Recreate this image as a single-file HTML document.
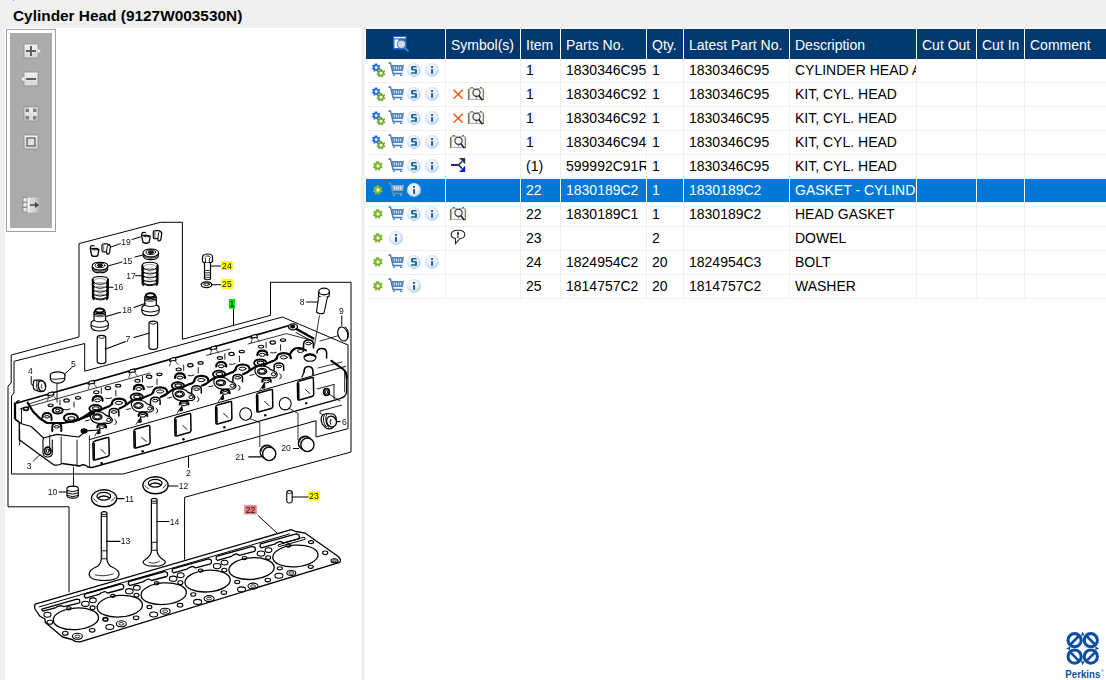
<!DOCTYPE html>
<html><head><meta charset="utf-8">
<style>
html,body{margin:0;padding:0;width:1106px;height:680px;overflow:hidden;background:#f0f0f0;font-family:"Liberation Sans",sans-serif;}
.title{position:absolute;left:13px;top:4.7px;font-size:15.4px;font-weight:bold;color:#000;line-height:22px;white-space:nowrap;}
.panel{position:absolute;background:#fff;}
.ht{position:absolute;color:#fff;font-size:14px;line-height:30px;white-space:nowrap;}
.ct{position:absolute;color:#000;font-size:14px;line-height:23px;white-space:nowrap;overflow:hidden;}
.ct.sel{color:#fff;}
svg{position:absolute;left:0;top:0;}
</style></head><body>
<div id="topmark" style="position:absolute;left:13px;top:0;width:1px;height:1px;background:#9a9a9a"></div>
<div class="title">Cylinder Head (9127W003530N)</div>
<div class="panel" style="left:5px;top:28px;width:356px;height:652px"></div>
<div class="panel" style="left:365px;top:28px;width:741px;height:652px"></div>
<div style="position:absolute;left:366px;top:29px;width:740px;height:30px;background:#00396f"></div>
<div style="position:absolute;left:445px;top:29px;width:1px;height:30px;background:#ffffff"></div>
<div style="position:absolute;left:520px;top:29px;width:1px;height:30px;background:#ffffff"></div>
<div style="position:absolute;left:560px;top:29px;width:1px;height:30px;background:#ffffff"></div>
<div style="position:absolute;left:646px;top:29px;width:1px;height:30px;background:#ffffff"></div>
<div style="position:absolute;left:683px;top:29px;width:1px;height:30px;background:#ffffff"></div>
<div style="position:absolute;left:789px;top:29px;width:1px;height:30px;background:#ffffff"></div>
<div style="position:absolute;left:916px;top:29px;width:1px;height:30px;background:#ffffff"></div>
<div style="position:absolute;left:976px;top:29px;width:1px;height:30px;background:#ffffff"></div>
<div style="position:absolute;left:1024px;top:29px;width:1px;height:30px;background:#ffffff"></div>
<div class="ht" style="left:451px;top:30px">Symbol(s)</div>
<div class="ht" style="left:526px;top:30px">Item</div>
<div class="ht" style="left:566px;top:30px">Parts No.</div>
<div class="ht" style="left:652px;top:30px">Qty.</div>
<div class="ht" style="left:689px;top:30px">Latest Part No.</div>
<div class="ht" style="left:795px;top:30px">Description</div>
<div class="ht" style="left:922px;top:30px">Cut Out</div>
<div class="ht" style="left:982px;top:30px">Cut In</div>
<div class="ht" style="left:1030px;top:30px">Comment</div>
<div style="position:absolute;left:366px;top:82px;width:740px;height:1px;background:#efefef"></div>
<div style="position:absolute;left:445px;top:59px;width:1px;height:23px;background:#efefef"></div>
<div style="position:absolute;left:520px;top:59px;width:1px;height:23px;background:#efefef"></div>
<div style="position:absolute;left:560px;top:59px;width:1px;height:23px;background:#efefef"></div>
<div style="position:absolute;left:646px;top:59px;width:1px;height:23px;background:#efefef"></div>
<div style="position:absolute;left:683px;top:59px;width:1px;height:23px;background:#efefef"></div>
<div style="position:absolute;left:789px;top:59px;width:1px;height:23px;background:#efefef"></div>
<div style="position:absolute;left:916px;top:59px;width:1px;height:23px;background:#efefef"></div>
<div style="position:absolute;left:976px;top:59px;width:1px;height:23px;background:#efefef"></div>
<div style="position:absolute;left:1024px;top:59px;width:1px;height:23px;background:#efefef"></div>
<div class="ct" style="left:526px;top:59px;width:34px">1</div>
<div class="ct" style="left:566px;top:59px;width:80px">1830346C95</div>
<div class="ct" style="left:652px;top:59px;width:31px">1</div>
<div class="ct" style="left:689px;top:59px;width:100px">1830346C95</div>
<div class="ct" style="left:795px;top:59px;width:121px">CYLINDER HEAD ASSEMBLY</div>
<div style="position:absolute;left:366px;top:106px;width:740px;height:1px;background:#efefef"></div>
<div style="position:absolute;left:445px;top:83px;width:1px;height:23px;background:#efefef"></div>
<div style="position:absolute;left:520px;top:83px;width:1px;height:23px;background:#efefef"></div>
<div style="position:absolute;left:560px;top:83px;width:1px;height:23px;background:#efefef"></div>
<div style="position:absolute;left:646px;top:83px;width:1px;height:23px;background:#efefef"></div>
<div style="position:absolute;left:683px;top:83px;width:1px;height:23px;background:#efefef"></div>
<div style="position:absolute;left:789px;top:83px;width:1px;height:23px;background:#efefef"></div>
<div style="position:absolute;left:916px;top:83px;width:1px;height:23px;background:#efefef"></div>
<div style="position:absolute;left:976px;top:83px;width:1px;height:23px;background:#efefef"></div>
<div style="position:absolute;left:1024px;top:83px;width:1px;height:23px;background:#efefef"></div>
<div class="ct" style="left:526px;top:83px;width:34px">1</div>
<div class="ct" style="left:566px;top:83px;width:80px">1830346C92</div>
<div class="ct" style="left:652px;top:83px;width:31px">1</div>
<div class="ct" style="left:689px;top:83px;width:100px">1830346C95</div>
<div class="ct" style="left:795px;top:83px;width:121px">KIT, CYL. HEAD</div>
<div style="position:absolute;left:366px;top:130px;width:740px;height:1px;background:#efefef"></div>
<div style="position:absolute;left:445px;top:107px;width:1px;height:23px;background:#efefef"></div>
<div style="position:absolute;left:520px;top:107px;width:1px;height:23px;background:#efefef"></div>
<div style="position:absolute;left:560px;top:107px;width:1px;height:23px;background:#efefef"></div>
<div style="position:absolute;left:646px;top:107px;width:1px;height:23px;background:#efefef"></div>
<div style="position:absolute;left:683px;top:107px;width:1px;height:23px;background:#efefef"></div>
<div style="position:absolute;left:789px;top:107px;width:1px;height:23px;background:#efefef"></div>
<div style="position:absolute;left:916px;top:107px;width:1px;height:23px;background:#efefef"></div>
<div style="position:absolute;left:976px;top:107px;width:1px;height:23px;background:#efefef"></div>
<div style="position:absolute;left:1024px;top:107px;width:1px;height:23px;background:#efefef"></div>
<div class="ct" style="left:526px;top:107px;width:34px">1</div>
<div class="ct" style="left:566px;top:107px;width:80px">1830346C92</div>
<div class="ct" style="left:652px;top:107px;width:31px">1</div>
<div class="ct" style="left:689px;top:107px;width:100px">1830346C95</div>
<div class="ct" style="left:795px;top:107px;width:121px">KIT, CYL. HEAD</div>
<div style="position:absolute;left:366px;top:154px;width:740px;height:1px;background:#efefef"></div>
<div style="position:absolute;left:445px;top:131px;width:1px;height:23px;background:#efefef"></div>
<div style="position:absolute;left:520px;top:131px;width:1px;height:23px;background:#efefef"></div>
<div style="position:absolute;left:560px;top:131px;width:1px;height:23px;background:#efefef"></div>
<div style="position:absolute;left:646px;top:131px;width:1px;height:23px;background:#efefef"></div>
<div style="position:absolute;left:683px;top:131px;width:1px;height:23px;background:#efefef"></div>
<div style="position:absolute;left:789px;top:131px;width:1px;height:23px;background:#efefef"></div>
<div style="position:absolute;left:916px;top:131px;width:1px;height:23px;background:#efefef"></div>
<div style="position:absolute;left:976px;top:131px;width:1px;height:23px;background:#efefef"></div>
<div style="position:absolute;left:1024px;top:131px;width:1px;height:23px;background:#efefef"></div>
<div class="ct" style="left:526px;top:131px;width:34px">1</div>
<div class="ct" style="left:566px;top:131px;width:80px">1830346C94</div>
<div class="ct" style="left:652px;top:131px;width:31px">1</div>
<div class="ct" style="left:689px;top:131px;width:100px">1830346C95</div>
<div class="ct" style="left:795px;top:131px;width:121px">KIT, CYL. HEAD</div>
<div style="position:absolute;left:366px;top:178px;width:740px;height:1px;background:#efefef"></div>
<div style="position:absolute;left:445px;top:155px;width:1px;height:23px;background:#efefef"></div>
<div style="position:absolute;left:520px;top:155px;width:1px;height:23px;background:#efefef"></div>
<div style="position:absolute;left:560px;top:155px;width:1px;height:23px;background:#efefef"></div>
<div style="position:absolute;left:646px;top:155px;width:1px;height:23px;background:#efefef"></div>
<div style="position:absolute;left:683px;top:155px;width:1px;height:23px;background:#efefef"></div>
<div style="position:absolute;left:789px;top:155px;width:1px;height:23px;background:#efefef"></div>
<div style="position:absolute;left:916px;top:155px;width:1px;height:23px;background:#efefef"></div>
<div style="position:absolute;left:976px;top:155px;width:1px;height:23px;background:#efefef"></div>
<div style="position:absolute;left:1024px;top:155px;width:1px;height:23px;background:#efefef"></div>
<div class="ct" style="left:526px;top:155px;width:34px">(1)</div>
<div class="ct" style="left:566px;top:155px;width:80px">599992C91R</div>
<div class="ct" style="left:652px;top:155px;width:31px">1</div>
<div class="ct" style="left:689px;top:155px;width:100px">1830346C95</div>
<div class="ct" style="left:795px;top:155px;width:121px">KIT, CYL. HEAD</div>
<div style="position:absolute;left:366px;top:179px;width:740px;height:23px;background:#0078d7"></div>
<div style="position:absolute;left:366px;top:202px;width:740px;height:1px;background:#efefef"></div>
<div style="position:absolute;left:445px;top:179px;width:1px;height:23px;background:#ffffff"></div>
<div style="position:absolute;left:520px;top:179px;width:1px;height:23px;background:#ffffff"></div>
<div style="position:absolute;left:560px;top:179px;width:1px;height:23px;background:#ffffff"></div>
<div style="position:absolute;left:646px;top:179px;width:1px;height:23px;background:#ffffff"></div>
<div style="position:absolute;left:683px;top:179px;width:1px;height:23px;background:#ffffff"></div>
<div style="position:absolute;left:789px;top:179px;width:1px;height:23px;background:#ffffff"></div>
<div style="position:absolute;left:916px;top:179px;width:1px;height:23px;background:#ffffff"></div>
<div style="position:absolute;left:976px;top:179px;width:1px;height:23px;background:#ffffff"></div>
<div style="position:absolute;left:1024px;top:179px;width:1px;height:23px;background:#ffffff"></div>
<div class="ct sel" style="left:526px;top:179px;width:34px">22</div>
<div class="ct sel" style="left:566px;top:179px;width:80px">1830189C2</div>
<div class="ct sel" style="left:652px;top:179px;width:31px">1</div>
<div class="ct sel" style="left:689px;top:179px;width:100px">1830189C2</div>
<div class="ct sel" style="left:795px;top:179px;width:121px">GASKET - CYLINDER HEAD</div>
<div style="position:absolute;left:366px;top:226px;width:740px;height:1px;background:#efefef"></div>
<div style="position:absolute;left:445px;top:203px;width:1px;height:23px;background:#efefef"></div>
<div style="position:absolute;left:520px;top:203px;width:1px;height:23px;background:#efefef"></div>
<div style="position:absolute;left:560px;top:203px;width:1px;height:23px;background:#efefef"></div>
<div style="position:absolute;left:646px;top:203px;width:1px;height:23px;background:#efefef"></div>
<div style="position:absolute;left:683px;top:203px;width:1px;height:23px;background:#efefef"></div>
<div style="position:absolute;left:789px;top:203px;width:1px;height:23px;background:#efefef"></div>
<div style="position:absolute;left:916px;top:203px;width:1px;height:23px;background:#efefef"></div>
<div style="position:absolute;left:976px;top:203px;width:1px;height:23px;background:#efefef"></div>
<div style="position:absolute;left:1024px;top:203px;width:1px;height:23px;background:#efefef"></div>
<div class="ct" style="left:526px;top:203px;width:34px">22</div>
<div class="ct" style="left:566px;top:203px;width:80px">1830189C1</div>
<div class="ct" style="left:652px;top:203px;width:31px">1</div>
<div class="ct" style="left:689px;top:203px;width:100px">1830189C2</div>
<div class="ct" style="left:795px;top:203px;width:121px">HEAD GASKET</div>
<div style="position:absolute;left:366px;top:250px;width:740px;height:1px;background:#efefef"></div>
<div style="position:absolute;left:445px;top:227px;width:1px;height:23px;background:#efefef"></div>
<div style="position:absolute;left:520px;top:227px;width:1px;height:23px;background:#efefef"></div>
<div style="position:absolute;left:560px;top:227px;width:1px;height:23px;background:#efefef"></div>
<div style="position:absolute;left:646px;top:227px;width:1px;height:23px;background:#efefef"></div>
<div style="position:absolute;left:683px;top:227px;width:1px;height:23px;background:#efefef"></div>
<div style="position:absolute;left:789px;top:227px;width:1px;height:23px;background:#efefef"></div>
<div style="position:absolute;left:916px;top:227px;width:1px;height:23px;background:#efefef"></div>
<div style="position:absolute;left:976px;top:227px;width:1px;height:23px;background:#efefef"></div>
<div style="position:absolute;left:1024px;top:227px;width:1px;height:23px;background:#efefef"></div>
<div class="ct" style="left:526px;top:227px;width:34px">23</div>
<div class="ct" style="left:652px;top:227px;width:31px">2</div>
<div class="ct" style="left:795px;top:227px;width:121px">DOWEL</div>
<div style="position:absolute;left:366px;top:274px;width:740px;height:1px;background:#efefef"></div>
<div style="position:absolute;left:445px;top:251px;width:1px;height:23px;background:#efefef"></div>
<div style="position:absolute;left:520px;top:251px;width:1px;height:23px;background:#efefef"></div>
<div style="position:absolute;left:560px;top:251px;width:1px;height:23px;background:#efefef"></div>
<div style="position:absolute;left:646px;top:251px;width:1px;height:23px;background:#efefef"></div>
<div style="position:absolute;left:683px;top:251px;width:1px;height:23px;background:#efefef"></div>
<div style="position:absolute;left:789px;top:251px;width:1px;height:23px;background:#efefef"></div>
<div style="position:absolute;left:916px;top:251px;width:1px;height:23px;background:#efefef"></div>
<div style="position:absolute;left:976px;top:251px;width:1px;height:23px;background:#efefef"></div>
<div style="position:absolute;left:1024px;top:251px;width:1px;height:23px;background:#efefef"></div>
<div class="ct" style="left:526px;top:251px;width:34px">24</div>
<div class="ct" style="left:566px;top:251px;width:80px">1824954C2</div>
<div class="ct" style="left:652px;top:251px;width:31px">20</div>
<div class="ct" style="left:689px;top:251px;width:100px">1824954C3</div>
<div class="ct" style="left:795px;top:251px;width:121px">BOLT</div>
<div style="position:absolute;left:366px;top:298px;width:740px;height:1px;background:#efefef"></div>
<div style="position:absolute;left:445px;top:275px;width:1px;height:23px;background:#efefef"></div>
<div style="position:absolute;left:520px;top:275px;width:1px;height:23px;background:#efefef"></div>
<div style="position:absolute;left:560px;top:275px;width:1px;height:23px;background:#efefef"></div>
<div style="position:absolute;left:646px;top:275px;width:1px;height:23px;background:#efefef"></div>
<div style="position:absolute;left:683px;top:275px;width:1px;height:23px;background:#efefef"></div>
<div style="position:absolute;left:789px;top:275px;width:1px;height:23px;background:#efefef"></div>
<div style="position:absolute;left:916px;top:275px;width:1px;height:23px;background:#efefef"></div>
<div style="position:absolute;left:976px;top:275px;width:1px;height:23px;background:#efefef"></div>
<div style="position:absolute;left:1024px;top:275px;width:1px;height:23px;background:#efefef"></div>
<div class="ct" style="left:526px;top:275px;width:34px">25</div>
<div class="ct" style="left:566px;top:275px;width:80px">1814757C2</div>
<div class="ct" style="left:652px;top:275px;width:31px">20</div>
<div class="ct" style="left:689px;top:275px;width:100px">1814757C2</div>
<div class="ct" style="left:795px;top:275px;width:121px">WASHER</div>
<svg width="1106" height="680" viewBox="0 0 1106 680">
<defs>
  <linearGradient id="btng" x1="0" y1="0" x2="0" y2="1">
    <stop offset="0" stop-color="#f4f4f4"/><stop offset="0.5" stop-color="#e2e2e2"/><stop offset="1" stop-color="#d6d6d6"/>
  </linearGradient>
  <linearGradient id="fadeg" x1="0" y1="0" x2="1" y2="0"><stop offset="0" stop-color="#e8e8e8"/><stop offset="0.6" stop-color="#cfcfcf"/><stop offset="1" stop-color="#ababab"/></linearGradient>
  <radialGradient id="circg" cx="0.45" cy="0.42" r="0.6">
    <stop offset="0" stop-color="#ffffff"/><stop offset="0.5" stop-color="#eef4fa"/><stop offset="0.85" stop-color="#c3d9ee"/><stop offset="1" stop-color="#a8c7e5"/>
  </radialGradient>
  <g id="gearshape">
    <path d="M0,-4.6 L1.2,-4.6 L1.5,-3.3 L2.7,-2.6 L3.9,-3.2 L4.6,-2.2 L3.7,-1.2 L3.8,0.3 L4.8,1.1 L4.3,2.3 L3.0,2.2 L2.0,3.2 L2.2,4.5 L1.0,4.8 L0.3,3.8 L-1.2,3.8 L-2.0,4.8 L-3.1,4.2 L-2.9,3.0 L-3.8,2.0 L-4.9,2.0 L-5.0,0.8 L-3.9,0.2 L-3.9,-1.2 L-4.8,-2.0 L-4.2,-3.2 L-2.9,-2.9 L-1.8,-3.6 L-1.6,-4.8 Z"/>
  </g>
  <g id="gears2">
    <g transform="translate(6.2,8.6) scale(0.88)" fill="#2a6fe0"><use href="#gearshape"/><circle r="1.6" fill="#fff"/></g>
    <g transform="translate(11,14.2) scale(0.9)" fill="#6fae2a"><use href="#gearshape"/><circle r="1.6" fill="#fff"/></g>
  </g>
  <g id="gear1">
    <g transform="translate(8,10.9)" fill="#7fba2c"><use href="#gearshape"/><circle r="1.6" fill="#fff"/></g>
  </g>
  <g id="cart">
    <path d="M0.5,4 L2.5,4 L5,14.5 L14.5,14.5" fill="none" stroke="#4a72a8" stroke-width="1.3"/>
    <path d="M3.5,6 L16,6 L15,12 L5,12 Z" fill="#5b82b8"/>
    <path d="M5.5,7.5 L14.5,7.5 L14,10.5 L6,10.5 Z" fill="#c7d7ea"/>
    <path d="M7.5,7 V11 M9.5,7 V11 M11.5,7 V11 M13.5,7 V11" stroke="#5b82b8" stroke-width="0.9"/>
    <rect x="5" y="15.5" width="2" height="1.5" fill="#3a8ee0"/><rect x="12" y="15.5" width="2" height="1.5" fill="#3a8ee0"/>
  </g>
  <g id="cartsel">
    <path d="M0.5,4 L2.5,4 L5,14.5 L14.5,14.5" fill="none" stroke="#6f8fb8" stroke-width="1.3"/>
    <path d="M3.5,6 L16,6 L15,12 L5,12 Z" fill="#8aa6c8"/>
    <path d="M5.5,7.5 L14.5,7.5 L14,10.5 L6,10.5 Z" fill="#e8eef5"/>
    <path d="M7.5,7 V11 M9.5,7 V11 M11.5,7 V11 M13.5,7 V11" stroke="#8aa6c8" stroke-width="0.9"/>
    <rect x="5" y="15.5" width="2" height="1.5" fill="#6fa8e0"/><rect x="12" y="15.5" width="2" height="1.5" fill="#6fa8e0"/>
  </g>
  <g id="sic">
    <circle cx="7.9" cy="10.9" r="7" fill="url(#circg)"/>
    <path d="M6,6.9 H10.6 V8.4 H7.2 V10.1 H9.6 Q11,10.2 11,11.6 V13.4 Q11,14.8 9.6,14.8 H5 V13.3 H9 V11.6 H6.4 Q5,11.5 5,10.1 V8.4 Q5,6.9 6,6.9 Z" fill="#1766ae"/>
  </g>
  <g id="iic">
    <circle cx="8" cy="10.9" r="7" fill="url(#circg)"/>
    <rect x="7" y="7" width="2.1" height="1.9" fill="#2f5f9f"/>
    <rect x="7" y="10.1" width="2.1" height="4.7" fill="#2f5f9f"/>
  </g>
  <g id="xic">
    <path d="M2.5,6.8 L11.8,15.8 M11.8,6.8 L2.5,15.8" stroke="#ff5a1a" stroke-width="1.6"/>
  </g>
  <g id="book">
    <path d="M-0.5,6 V17 M14.5,6 V17 M1.5,4.5 H4 M11,4.5 H13" stroke="#7a7a40" stroke-width="1.2" fill="none"/>
    <path d="M0.5,5.5 L6.5,5.5 L7.5,16.5 L0.5,16.5 Z M8,5.5 L14,5.5 L14,16.5 L7.5,16.5 Z" fill="#f6f6f6" stroke="#999" stroke-width="0.8"/>
    <circle cx="7.5" cy="9.8" r="3.6" fill="#f4f4f4" stroke="#333" stroke-width="1.1"/>
    <path d="M9.7,12.6 L13.5,17.2" stroke="#222" stroke-width="1.6"/>
  </g>
  <g id="arrowic">
    <path d="M0,10 H7.5" stroke="#0d1660" stroke-width="1.8"/>
    <path d="M7.5,10 L11,6.5" stroke="#333" stroke-width="1.6"/>
    <path d="M8,3 H14.2 V9.2 Z" fill="#333"/>
    <path d="M7.5,10 L11,13.5" stroke="#1022a0" stroke-width="1.6"/>
    <path d="M8,17 H14.2 V10.8 Z" fill="#0a20e8"/>
  </g>
  <g id="bubble">
    <path d="M4.5,11.5 C1,11 0.2,9 0.2,7.5 C0.2,5 2.5,3.2 7,3.2 C11.5,3.2 13.8,5 13.8,7.5 C13.8,10 11.5,11.5 9,11.5 L4.5,16.5 Z" fill="#fff" stroke="#222" stroke-width="1.1"/>
    <rect x="6.2" y="4.8" width="1.6" height="3.6" fill="#222"/><rect x="6.2" y="9.2" width="1.6" height="1.6" fill="#222"/>
  </g>
</defs>
<!-- header icon -->
<g>
  <rect x="393" y="36" width="13.5" height="13.5" fill="#1f6fc0"/>
  <rect x="394.5" y="39.5" width="4" height="8.5" fill="#fff"/>
  <rect x="394" y="37" width="11.5" height="1.3" fill="#fff"/>
  <circle cx="401.5" cy="44.3" r="4.2" fill="#d8d8d8" stroke="#2a70c0" stroke-width="1"/>
  <path d="M404.5,47.5 L408.5,51.5" stroke="#3a80d0" stroke-width="2"/>
</g>
<use href="#gears2" x="370" y="59"/>
<use href="#cart" x="388" y="59"/>
<use href="#sic" x="406" y="59"/>
<use href="#iic" x="424" y="59"/>
<use href="#gears2" x="370" y="83"/>
<use href="#cart" x="388" y="83"/>
<use href="#sic" x="406" y="83"/>
<use href="#iic" x="424" y="83"/>
<use href="#xic" x="451" y="83"/>
<use href="#book" x="469" y="83"/>
<use href="#gears2" x="370" y="107"/>
<use href="#cart" x="388" y="107"/>
<use href="#sic" x="406" y="107"/>
<use href="#iic" x="424" y="107"/>
<use href="#xic" x="451" y="107"/>
<use href="#book" x="469" y="107"/>
<use href="#gears2" x="370" y="131"/>
<use href="#cart" x="388" y="131"/>
<use href="#sic" x="406" y="131"/>
<use href="#iic" x="424" y="131"/>
<use href="#book" x="451" y="131"/>
<use href="#gear1" x="370" y="155"/>
<use href="#cart" x="388" y="155"/>
<use href="#sic" x="406" y="155"/>
<use href="#iic" x="424" y="155"/>
<use href="#arrowic" x="451" y="155"/>
<use href="#gear1" x="370" y="179"/>
<use href="#cartsel" x="388" y="179"/>
<use href="#iic" x="406" y="179"/>
<use href="#gear1" x="370" y="203"/>
<use href="#cart" x="388" y="203"/>
<use href="#sic" x="406" y="203"/>
<use href="#iic" x="424" y="203"/>
<use href="#book" x="451" y="203"/>
<use href="#gear1" x="370" y="227"/>
<use href="#iic" x="388" y="227"/>
<use href="#bubble" x="451" y="227"/>
<use href="#gear1" x="370" y="251"/>
<use href="#cart" x="388" y="251"/>
<use href="#sic" x="406" y="251"/>
<use href="#iic" x="424" y="251"/>
<use href="#gear1" x="370" y="275"/>
<use href="#cart" x="388" y="275"/>
<use href="#iic" x="406" y="275"/>
<!-- toolbar -->
<g>
  <rect x="6.5" y="29.5" width="49" height="202" fill="#fff" stroke="#a0a0a0" stroke-width="1"/>
  <rect x="10" y="33" width="42" height="195" fill="#ababab"/>
  <rect x="24" y="44" width="14" height="14" fill="url(#btng)" stroke="#8a8a8a" stroke-width="0.8"/>
  <path d="M37.6,48.6 L40.8,51 L37.6,53.4Z" fill="#f2f2f2"/>
  <rect x="26" y="50" width="10" height="2" fill="#5e5e5e"/><rect x="30" y="46" width="2" height="10" fill="#5e5e5e"/>
  <rect x="24" y="72" width="14" height="14" fill="url(#btng)" stroke="#8a8a8a" stroke-width="0.8"/>
  <path d="M24.4,76.6 L21.2,79 L24.4,81.4Z" fill="#f2f2f2"/>
  <rect x="26" y="78" width="10" height="2" fill="#5e5e5e"/>
  <rect x="24" y="107" width="14" height="14" fill="url(#btng)" stroke="#8a8a8a" stroke-width="0.8"/>
  <rect x="25.5" y="108.5" width="3.5" height="3.5" fill="#808080"/><rect x="33" y="108.5" width="3.5" height="3.5" fill="#808080"/>
  <rect x="25.5" y="116" width="3.5" height="3.5" fill="#808080"/><rect x="33" y="116" width="3.5" height="3.5" fill="#808080"/>
  <rect x="24" y="135" width="14" height="14" fill="url(#btng)" stroke="#8a8a8a" stroke-width="0.8"/>
  <rect x="27" y="138" width="8" height="8" fill="#e0e0e0" stroke="#555" stroke-width="1.2"/>
  <rect x="23" y="197.5" width="4" height="4.5" fill="#eee" stroke="#777" stroke-width="0.7"/>
  <rect x="23" y="202.5" width="4" height="4.5" fill="#eee" stroke="#777" stroke-width="0.7"/>
  <rect x="23" y="207.5" width="4" height="4.5" fill="#eee" stroke="#777" stroke-width="0.7"/>
  <rect x="28" y="197.5" width="12" height="15" fill="url(#fadeg)"/>
  <path d="M28,197.5 V212.5" stroke="#fff" stroke-width="1"/>
  <path d="M30,205 H36" stroke="#444" stroke-width="1.5"/><path d="M35,202 L39,205 L35,208Z" fill="#444"/>
</g>
<g stroke="#000" fill="none" stroke-width="1">
<polyline points="8,506.8 8,386 11.2,383 11.2,355 79,337 79,243.6 160.5,222.3 182.4,222.3 182.4,339.3 270.5,315.4 270.5,282.3 351,282.3 351,452 184.6,497.3 184.6,559.7"/>
<polyline points="69,592.4 69,506.8 8,506.8"/>
<polyline points="84.7,343.5 84.7,371.2 282.4,317 348,345 348,428.7 316,437 316,420.7 297,426"/>
<polyline points="297,426 123,474 11.5,474 11.5,396 14,393 14,361.3 84.7,343.5"/>
</g>
<g stroke="#000" fill="none" stroke-width="1.3" stroke-linejoin="round">
<path d="M35.3,604.2 L291.2,529.7 L295.6,531.5 L305.3,533.2 L337.5,556 Q342,559.5 339.7,562.3 L80,641.8 Q76,642.5 72,639.5 L62.6,637 L45.4,622.5 L45,619 L40,616.3 L35,609 Q34,605.5 35.3,604.2 Z" fill="#fff"/>
<path d="M38.8,607 L290,533.8" stroke-width="1"/>
<ellipse cx="75.9" cy="618.8" rx="22.7" ry="10.8" stroke-width="1.3" fill="none" transform="rotate(-4 75.9 618.8)"/>
<path d="M41.9,609.1 L76.9,599.1 L79.4,599.6 L79.9,602.1 L78.9,603.1 L63.9,606.6 L60.9,605.6 L56.9,606.6 L55.9,607.6 L42.9,611.1 L41.9,610.1 Z" stroke-width="1.3"/>
<ellipse cx="68.9" cy="608.3" rx="2.2" ry="1.6" stroke-width="1.1" fill="none"/>
<ellipse cx="85.4" cy="603.8" rx="3.8" ry="2.6" stroke-width="1.1" fill="none"/>
<ellipse cx="92.9" cy="600.3" rx="3.4" ry="2.4" stroke-width="1.1" fill="none"/>
<ellipse cx="92.6" cy="607.8" rx="2.5" ry="1.9" stroke-width="1.1" fill="none"/>
<ellipse cx="92.2" cy="630.3" rx="2.8" ry="1.8" stroke-width="1.1" fill="none"/>
<ellipse cx="77.4" cy="636.3" rx="5.0" ry="3.0" stroke-width="1.1" fill="none"/>
<ellipse cx="47.4" cy="614.8" rx="3.5" ry="2.5" stroke-width="1.1" fill="none"/>
<ellipse cx="49.9" cy="622.3" rx="3.0" ry="2.0" stroke-width="1.1" fill="none"/>
<ellipse cx="65.3" cy="633.3" rx="2.8" ry="2.0" stroke-width="1.1" fill="none"/>
<ellipse cx="105.4" cy="619.2" rx="2.5" ry="1.8" stroke-width="1.1" fill="none"/>
<ellipse cx="77.4" cy="636.3" rx="2.5" ry="1.3" stroke-width="0.8" fill="none"/>
<ellipse cx="119.8" cy="606.2" rx="22.7" ry="10.8" stroke-width="1.3" fill="none" transform="rotate(-4 119.8 606.2)"/>
<path d="M84.8,594.0 L120.8,584.0 L123.3,585.0 L123.8,587.5 L122.8,589.0 L107.8,593.0 L104.8,591.5 L100.8,593.0 L99.8,594.0 L85.8,598.0 L84.3,596.5 Z" stroke-width="1.3"/>
<ellipse cx="112.8" cy="595.8" rx="2.2" ry="1.6" stroke-width="1.1" fill="none"/>
<ellipse cx="129.3" cy="591.2" rx="3.8" ry="2.6" stroke-width="1.1" fill="none"/>
<ellipse cx="136.8" cy="587.8" rx="3.4" ry="2.4" stroke-width="1.1" fill="none"/>
<ellipse cx="136.5" cy="595.2" rx="2.5" ry="1.9" stroke-width="1.1" fill="none"/>
<ellipse cx="136.1" cy="617.8" rx="2.8" ry="1.8" stroke-width="1.1" fill="none"/>
<ellipse cx="121.3" cy="623.8" rx="5.0" ry="3.0" stroke-width="1.1" fill="none"/>
<ellipse cx="105.5" cy="619.6" rx="2.5" ry="1.7" stroke-width="1.1" fill="none"/>
<ellipse cx="109.8" cy="627.0" rx="4.0" ry="2.5" stroke-width="1.1" fill="none"/>
<ellipse cx="121.3" cy="623.8" rx="2.5" ry="1.3" stroke-width="0.8" fill="none"/>
<ellipse cx="163.7" cy="593.7" rx="22.7" ry="10.8" stroke-width="1.3" fill="none" transform="rotate(-4 163.7 593.7)"/>
<path d="M128.7,581.5 L164.7,571.5 L167.2,572.5 L167.7,575.0 L166.7,576.5 L151.7,580.5 L148.7,579.0 L144.7,580.5 L143.7,581.5 L129.7,585.5 L128.2,584.0 Z" stroke-width="1.3"/>
<ellipse cx="156.7" cy="583.2" rx="2.2" ry="1.6" stroke-width="1.1" fill="none"/>
<ellipse cx="173.2" cy="578.7" rx="3.8" ry="2.6" stroke-width="1.1" fill="none"/>
<ellipse cx="180.7" cy="575.2" rx="3.4" ry="2.4" stroke-width="1.1" fill="none"/>
<ellipse cx="180.4" cy="582.7" rx="2.5" ry="1.9" stroke-width="1.1" fill="none"/>
<ellipse cx="180.0" cy="605.2" rx="2.8" ry="1.8" stroke-width="1.1" fill="none"/>
<ellipse cx="165.2" cy="611.2" rx="5.0" ry="3.0" stroke-width="1.1" fill="none"/>
<ellipse cx="149.4" cy="607.1" rx="2.5" ry="1.7" stroke-width="1.1" fill="none"/>
<ellipse cx="153.7" cy="614.5" rx="4.0" ry="2.5" stroke-width="1.1" fill="none"/>
<ellipse cx="165.2" cy="611.2" rx="2.5" ry="1.3" stroke-width="0.8" fill="none"/>
<ellipse cx="207.6" cy="581.1" rx="22.7" ry="10.8" stroke-width="1.3" fill="none" transform="rotate(-4 207.6 581.1)"/>
<path d="M172.6,568.9 L208.6,558.9 L211.1,559.9 L211.6,562.4 L210.6,563.9 L195.6,567.9 L192.6,566.4 L188.6,567.9 L187.6,568.9 L173.6,572.9 L172.1,571.4 Z" stroke-width="1.3"/>
<ellipse cx="200.6" cy="570.6" rx="2.2" ry="1.6" stroke-width="1.1" fill="none"/>
<ellipse cx="217.1" cy="566.1" rx="3.8" ry="2.6" stroke-width="1.1" fill="none"/>
<ellipse cx="224.6" cy="562.6" rx="3.4" ry="2.4" stroke-width="1.1" fill="none"/>
<ellipse cx="224.3" cy="570.1" rx="2.5" ry="1.9" stroke-width="1.1" fill="none"/>
<ellipse cx="223.9" cy="592.6" rx="2.8" ry="1.8" stroke-width="1.1" fill="none"/>
<ellipse cx="209.1" cy="598.6" rx="5.0" ry="3.0" stroke-width="1.1" fill="none"/>
<ellipse cx="193.3" cy="594.5" rx="2.5" ry="1.7" stroke-width="1.1" fill="none"/>
<ellipse cx="197.6" cy="601.9" rx="4.0" ry="2.5" stroke-width="1.1" fill="none"/>
<ellipse cx="209.1" cy="598.6" rx="2.5" ry="1.3" stroke-width="0.8" fill="none"/>
<ellipse cx="251.5" cy="568.6" rx="22.7" ry="10.8" stroke-width="1.3" fill="none" transform="rotate(-4 251.5 568.6)"/>
<path d="M216.5,556.4 L252.5,546.4 L255.0,547.4 L255.5,549.9 L254.5,551.4 L239.5,555.4 L236.5,553.9 L232.5,555.4 L231.5,556.4 L217.5,560.4 L216.0,558.9 Z" stroke-width="1.3"/>
<ellipse cx="244.5" cy="558.1" rx="2.2" ry="1.6" stroke-width="1.1" fill="none"/>
<ellipse cx="261.0" cy="553.6" rx="3.8" ry="2.6" stroke-width="1.1" fill="none"/>
<ellipse cx="268.5" cy="550.1" rx="3.4" ry="2.4" stroke-width="1.1" fill="none"/>
<ellipse cx="268.2" cy="557.6" rx="2.5" ry="1.9" stroke-width="1.1" fill="none"/>
<ellipse cx="267.8" cy="580.1" rx="2.8" ry="1.8" stroke-width="1.1" fill="none"/>
<ellipse cx="253.0" cy="586.1" rx="5.0" ry="3.0" stroke-width="1.1" fill="none"/>
<ellipse cx="237.2" cy="582.0" rx="2.5" ry="1.7" stroke-width="1.1" fill="none"/>
<ellipse cx="241.5" cy="589.4" rx="4.0" ry="2.5" stroke-width="1.1" fill="none"/>
<ellipse cx="253.0" cy="586.1" rx="2.5" ry="1.3" stroke-width="0.8" fill="none"/>
<ellipse cx="295.4" cy="556.0" rx="22.7" ry="10.8" stroke-width="1.3" fill="none" transform="rotate(-4 295.4 556.0)"/>
<path d="M260.4,543.8 L296.4,533.8 L298.9,534.8 L299.4,537.3 L298.4,538.8 L283.4,542.8 L280.4,541.3 L276.4,542.8 L275.4,543.8 L261.4,547.8 L259.9,546.3 Z" stroke-width="1.3"/>
<ellipse cx="288.4" cy="545.5" rx="2.2" ry="1.6" stroke-width="1.1" fill="none"/>
<path d="M278.4,544.8 L303.9,537.2 Q305.9,537.5 304.9,539.4 L279.4,546.5 Q277.4,546.5 278.4,544.8 Z" stroke-width="1"/>
<ellipse cx="334.5" cy="560.8" rx="1.8" ry="1.0" stroke-width="0.8" fill="none"/>
<ellipse cx="291.3" cy="573.0" rx="2.5" ry="1.2" stroke-width="0.8" fill="none"/>
<ellipse cx="311.1" cy="542.1" rx="2.6" ry="1.5" stroke-width="1.1" fill="none"/>
<ellipse cx="325.2" cy="552.8" rx="2.6" ry="1.8" stroke-width="1.1" fill="none"/>
<ellipse cx="334.5" cy="560.8" rx="3.5" ry="2.0" stroke-width="1.1" fill="none"/>
<ellipse cx="310.7" cy="566.8" rx="2.6" ry="1.6" stroke-width="1.1" fill="none"/>
<ellipse cx="291.3" cy="573.0" rx="4.5" ry="2.5" stroke-width="1.1" fill="none"/>
<ellipse cx="279.8" cy="568.2" rx="2.6" ry="1.5" stroke-width="1.1" fill="none"/>
<ellipse cx="278.9" cy="575.8" rx="4.0" ry="2.5" stroke-width="1.1" fill="none"/>
</g>
<g stroke="#000" fill="none" stroke-width="1.1" stroke-linejoin="round" stroke-linecap="round">
<path d="M202.5,257 Q203,254 207.5,254 Q212.5,254 212.5,257 L212.5,261 Q212,263 207.5,263 Q203,263 202.5,261 Z" fill="#fff" stroke-width="1.2"/>
<path d="M205,257.5 L206.5,256 L209,256 L210.5,257.5 M205.5,263 V258.5 M209.5,263 V258.5" stroke-width="0.8"/>
<path d="M204.5,263 L204.5,279 Q207.5,280.5 210.5,279 L210.5,263" fill="#fff" stroke-width="1.2"/>
<path d="M205,270.5 H210 M205,272.8 H210 M205,275.1 H210 M205,277.4 H210" stroke-width="0.8"/>
<path d="M210.6,266 H221" stroke-width="1"/>
<ellipse cx="206.5" cy="284.7" rx="5.3" ry="2.9" stroke-width="1.3" fill="#fff"/>
<ellipse cx="206.5" cy="284.2" rx="3.0" ry="1.2" stroke-width="1" fill="none"/>
<path d="M212,284.7 H221" stroke-width="1"/>
<path d="M233.5,308.8 V325.3" stroke-width="1"/>
<ellipse cx="324.1" cy="291.5" rx="5.3" ry="3.3" stroke-width="1.2" fill="#fff"/>
<path d="M318.8,292 L318.5,296 Q323,299 329,296.5 L329.4,292" stroke-width="1.2"/>
<path d="M318.5,297 L316.5,312 Q320,315 324,313 L327.5,297" fill="#fff" stroke-width="1.1"/>
<path d="M306.5,302 H318" stroke-width="1"/>
<path d="M319.4,315.8 L314.6,345" stroke-width="0.8"/>
<ellipse cx="342.8" cy="334.0" rx="4.8" ry="7.2" stroke-width="1.2" fill="#fff" transform="rotate(-18 342.8 334.0)"/>
<path d="M345,327 Q349.5,329 348,338" stroke-width="1"/>
<path d="M341.8,315.8 V325.4" stroke-width="1"/>
<path d="M337.5,335.9 L319.8,341.1" stroke-width="0.8"/>
</g>
<rect x="220.9" y="260.9" width="12" height="9.1" fill="#ffff00"/>
<rect x="220.9" y="278.8" width="12" height="10" fill="#ffff00"/>
<rect x="228.9" y="299" width="6.1" height="9.7" fill="#00e000"/>
<rect x="244.3" y="505.2" width="12.4" height="9.2" fill="#f07878"/>
<rect x="308.2" y="491" width="11.8" height="9.6" fill="#ffff00"/>
<filter id="gray0"><feColorMatrix type="saturate" values="0"/></filter><g font-family="Liberation Sans" font-size="8.6" fill="#111" filter="url(#gray0)"><text x="126" y="245" text-anchor="middle">19</text>
<text x="127.5" y="263.8" text-anchor="middle">15</text>
<text x="118.5" y="290.3" text-anchor="middle">16</text>
<text x="131" y="278.7" text-anchor="middle">17</text>
<text x="127" y="313.3" text-anchor="middle">18</text>
<text x="128" y="342" text-anchor="middle">7</text>
<text x="302.2" y="305.4" text-anchor="middle">8</text>
<text x="341.3" y="313.6" text-anchor="middle">9</text>
<text x="30.5" y="374.2" text-anchor="middle">4</text>
<text x="73.5" y="366.9" text-anchor="middle">5</text>
<text x="29.2" y="469" text-anchor="middle">3</text>
<text x="188.5" y="476" text-anchor="middle">2</text>
<text x="344.4" y="425" text-anchor="middle">6</text>
<text x="52.5" y="495" text-anchor="middle">10</text>
<text x="129.5" y="501.6" text-anchor="middle">11</text>
<text x="183.5" y="489" text-anchor="middle">12</text>
<text x="125.5" y="544.4" text-anchor="middle">13</text>
<text x="174.5" y="524.5" text-anchor="middle">14</text>
<text x="286" y="451.4" text-anchor="middle">20</text>
<text x="240" y="459.8" text-anchor="middle">21</text>
<text x="226.9" y="268.9" text-anchor="middle">24</text>
<text x="226.9" y="287.2" text-anchor="middle">25</text>
<text x="232" y="307" text-anchor="middle">1</text>
<text x="250.5" y="513.2" text-anchor="middle">22</text>
<text x="314.1" y="499" text-anchor="middle">23</text>
</g>
<g stroke="#000" fill="none" stroke-width="1.15" stroke-linejoin="round" stroke-linecap="round">
<g transform="translate(0,0)">
<path d="M90.3,248.5 L91.7,255.6 Q94.7,257.3 97.8,255.6 L98.9,249.6 Q97.5,248.2 94.5,248.6 Q92,248.6 90.3,248.5 Z" fill="#fff" stroke-width="1.3"/>
<path d="M90.4,248.5 Q89.8,245.6 92.6,245.5 L94.2,246" stroke-width="1.2"/>
<path d="M92.5,249.5 Q95,250.5 98,249.8" stroke-width="0.9"/>
<path d="M102,245 Q102,243.8 104,243.8 L107,243.8 Q109.5,244 110.5,246 L109.6,252.5 Q108.5,255 106.8,253.8 L106.5,251.8 L103,251.8 Q102,251.8 102,250.5 Z" fill="#fff" stroke-width="1.2"/>
<path d="M106.5,251.8 L107.3,246 Q108,244.5 109.5,245" stroke-width="1"/>
<path d="M103.5,244.5 V251" stroke="#888" stroke-width="1.5"/>
</g>
<g transform="translate(51.3,-13.2)">
<path d="M90.3,248.5 L91.7,255.6 Q94.7,257.3 97.8,255.6 L98.9,249.6 Q97.5,248.2 94.5,248.6 Q92,248.6 90.3,248.5 Z" fill="#fff" stroke-width="1.3"/>
<path d="M90.4,248.5 Q89.8,245.6 92.6,245.5 L94.2,246" stroke-width="1.2"/>
<path d="M92.5,249.5 Q95,250.5 98,249.8" stroke-width="0.9"/>
<path d="M102,245 Q102,243.8 104,243.8 L107,243.8 Q109.5,244 110.5,246 L109.6,252.5 Q108.5,255 106.8,253.8 L106.5,251.8 L103,251.8 Q102,251.8 102,250.5 Z" fill="#fff" stroke-width="1.2"/>
<path d="M106.5,251.8 L107.3,246 Q108,244.5 109.5,245" stroke-width="1"/>
<path d="M103.5,244.5 V251" stroke="#888" stroke-width="1.5"/>
</g>
<path d="M111,247 L120.5,243.6 M132,239.5 L141,236.8" stroke-width="1"/>
<g transform="translate(0,0)">
<path d="M92.2,266.5 Q92,262.3 100,262.2 Q108,262.3 107.8,266.5 L107.5,269.5 Q106.5,272.8 100,272.8 Q93.5,272.8 92.5,269.5 Z" fill="#fff" stroke-width="1.1"/>
<path d="M92.4,267 Q94,270 100,270.2 Q106,270 107.6,267" stroke-width="1.3"/>
<path d="M93.5,269.8 Q95,271.3 100,271.4 Q105,271.3 106.5,269.8" stroke-width="0.8"/>
<ellipse cx="100.0" cy="265.4" rx="4.8" ry="2.3" stroke-width="0.9" fill="none"/>
<ellipse cx="100.0" cy="265.4" rx="2.6" ry="1.3" stroke-width="1" fill="#222"/>
</g>
<g transform="translate(50.8,-13.2)">
<path d="M92.2,266.5 Q92,262.3 100,262.2 Q108,262.3 107.8,266.5 L107.5,269.5 Q106.5,272.8 100,272.8 Q93.5,272.8 92.5,269.5 Z" fill="#fff" stroke-width="1.1"/>
<path d="M92.4,267 Q94,270 100,270.2 Q106,270 107.6,267" stroke-width="1.3"/>
<path d="M93.5,269.8 Q95,271.3 100,271.4 Q105,271.3 106.5,269.8" stroke-width="0.8"/>
<ellipse cx="100.0" cy="265.4" rx="4.8" ry="2.3" stroke-width="0.9" fill="none"/>
<ellipse cx="100.0" cy="265.4" rx="2.6" ry="1.3" stroke-width="1" fill="#222"/>
</g>
<path d="M108,266 L122,262 M135,257 L143,255" stroke-width="1"/>
<g transform="translate(0,0)">
<path d="M92.3,280 L92.6,295.5 Q95,299 100.2,299 Q105.5,299 108,295.5 L108.3,280 Q108,276.5 100.2,276.5 Q92.5,276.5 92.3,280 Z" fill="#fff" stroke-width="1.1"/>
<path d="M93,280.8 Q94,284.1 100.2,284.3 Q106.5,284.1 107.6,280.8" stroke-width="1.0"/>
<path d="M94,280.5 Q96,278.5 100.2,278.4 Q104.5,278.5 106.5,280.5" stroke="#777" stroke-width="0.7"/>
<path d="M92.8,279.8 Q92.3,282.3 93.8,283.6 M107.8,279.8 Q108.3,282.3 106.8,283.6" stroke-width="1.9"/>
<path d="M93,284.7 Q94,288.0 100.2,288.2 Q106.5,288.0 107.6,284.7" stroke-width="1.0"/>
<path d="M94,284.4 Q96,282.4 100.2,282.3 Q104.5,282.4 106.5,284.4" stroke="#777" stroke-width="0.7"/>
<path d="M92.8,283.7 Q92.3,286.2 93.8,287.5 M107.8,283.7 Q108.3,286.2 106.8,287.5" stroke-width="1.9"/>
<path d="M93,288.6 Q94,291.9 100.2,292.1 Q106.5,291.9 107.6,288.6" stroke-width="1.0"/>
<path d="M94,288.3 Q96,286.3 100.2,286.2 Q104.5,286.3 106.5,288.3" stroke="#777" stroke-width="0.7"/>
<path d="M92.8,287.6 Q92.3,290.1 93.8,291.4 M107.8,287.6 Q108.3,290.1 106.8,291.4" stroke-width="1.9"/>
<path d="M93,292.5 Q94,295.8 100.2,296.0 Q106.5,295.8 107.6,292.5" stroke-width="1.0"/>
<path d="M94,292.2 Q96,290.2 100.2,290.1 Q104.5,290.2 106.5,292.2" stroke="#777" stroke-width="0.7"/>
<path d="M92.8,291.5 Q92.3,294.0 93.8,295.3 M107.8,291.5 Q108.3,294.0 106.8,295.3" stroke-width="1.9"/>
<path d="M93,296.4 Q94,299.7 100.2,299.9 Q106.5,299.7 107.6,296.4" stroke-width="1.0"/>
<path d="M94,296.1 Q96,294.1 100.2,294.0 Q104.5,294.1 106.5,296.1" stroke="#777" stroke-width="0.7"/>
<path d="M92.8,295.4 Q92.3,297.9 93.8,299.2 M107.8,295.4 Q108.3,297.9 106.8,299.2" stroke-width="1.9"/>
</g>
<g transform="translate(49.7,-14.2)">
<path d="M92.3,280 L92.6,295.5 Q95,299 100.2,299 Q105.5,299 108,295.5 L108.3,280 Q108,276.5 100.2,276.5 Q92.5,276.5 92.3,280 Z" fill="#fff" stroke-width="1.1"/>
<path d="M93,280.8 Q94,284.1 100.2,284.3 Q106.5,284.1 107.6,280.8" stroke-width="1.0"/>
<path d="M94,280.5 Q96,278.5 100.2,278.4 Q104.5,278.5 106.5,280.5" stroke="#777" stroke-width="0.7"/>
<path d="M92.8,279.8 Q92.3,282.3 93.8,283.6 M107.8,279.8 Q108.3,282.3 106.8,283.6" stroke-width="1.9"/>
<path d="M93,284.7 Q94,288.0 100.2,288.2 Q106.5,288.0 107.6,284.7" stroke-width="1.0"/>
<path d="M94,284.4 Q96,282.4 100.2,282.3 Q104.5,282.4 106.5,284.4" stroke="#777" stroke-width="0.7"/>
<path d="M92.8,283.7 Q92.3,286.2 93.8,287.5 M107.8,283.7 Q108.3,286.2 106.8,287.5" stroke-width="1.9"/>
<path d="M93,288.6 Q94,291.9 100.2,292.1 Q106.5,291.9 107.6,288.6" stroke-width="1.0"/>
<path d="M94,288.3 Q96,286.3 100.2,286.2 Q104.5,286.3 106.5,288.3" stroke="#777" stroke-width="0.7"/>
<path d="M92.8,287.6 Q92.3,290.1 93.8,291.4 M107.8,287.6 Q108.3,290.1 106.8,291.4" stroke-width="1.9"/>
<path d="M93,292.5 Q94,295.8 100.2,296.0 Q106.5,295.8 107.6,292.5" stroke-width="1.0"/>
<path d="M94,292.2 Q96,290.2 100.2,290.1 Q104.5,290.2 106.5,292.2" stroke="#777" stroke-width="0.7"/>
<path d="M92.8,291.5 Q92.3,294.0 93.8,295.3 M107.8,291.5 Q108.3,294.0 106.8,295.3" stroke-width="1.9"/>
<path d="M93,296.4 Q94,299.7 100.2,299.9 Q106.5,299.7 107.6,296.4" stroke-width="1.0"/>
<path d="M94,296.1 Q96,294.1 100.2,294.0 Q104.5,294.1 106.5,296.1" stroke="#777" stroke-width="0.7"/>
<path d="M92.8,295.4 Q92.3,297.9 93.8,299.2 M107.8,295.4 Q108.3,297.9 106.8,299.2" stroke-width="1.9"/>
</g>
<path d="M108.3,287.3 H113 M135.5,275.7 H141.7" stroke-width="1.1"/>
<g transform="translate(0,0)">
<path d="M91,325 Q90.8,321 94,320.5 L94,314.5 Q93.8,308.2 99.6,308.2 Q105.6,308.2 105.5,314.5 L105.6,320.5 Q108.6,321 108.4,325 L108,327.8 Q106.5,331 99.6,331 Q92.7,331 91.4,327.8 Z" fill="#fff" stroke-width="1.2"/>
<ellipse cx="99.6" cy="310.6" rx="4.2" ry="1.9" stroke-width="1.8" fill="none"/>
<path d="M94,312.5 Q99.6,315 105.5,312.5" stroke-width="1.3"/>
<path d="M94,314.5 Q99.6,316.5 105.5,314.5 M94,320.5 Q99.6,323.5 105.6,320.5 M91.2,325.5 Q99.6,329.5 108.2,325.5" stroke-width="1"/>
<path d="M94.5,316 Q99.6,318 105,316" stroke-width="0.7"/>
</g>
<g transform="translate(50.8,-15.4)">
<path d="M91,325 Q90.8,321 94,320.5 L94,314.5 Q93.8,308.2 99.6,308.2 Q105.6,308.2 105.5,314.5 L105.6,320.5 Q108.6,321 108.4,325 L108,327.8 Q106.5,331 99.6,331 Q92.7,331 91.4,327.8 Z" fill="#fff" stroke-width="1.2"/>
<ellipse cx="99.6" cy="310.6" rx="4.2" ry="1.9" stroke-width="1.8" fill="none"/>
<path d="M94,312.5 Q99.6,315 105.5,312.5" stroke-width="1.3"/>
<path d="M94,314.5 Q99.6,316.5 105.5,314.5 M94,320.5 Q99.6,323.5 105.6,320.5 M91.2,325.5 Q99.6,329.5 108.2,325.5" stroke-width="1"/>
<path d="M94.5,316 Q99.6,318 105,316" stroke-width="0.7"/>
</g>
<path d="M106,316.5 L120.5,312.2 M134,307.5 L145,303.5" stroke-width="1.1"/>
<g transform="translate(0,0)">
<path d="M97.2,337.5 Q97.3,335.3 101.5,335.3 Q105.7,335.3 105.8,337.5 L105.8,361.6 Q105.5,363.6 101.5,363.6 Q97.5,363.6 97.2,361.6 Z" fill="#fff" stroke-width="1.2"/>
<path d="M98.8,337.8 Q101.5,339.3 104.2,337.8" stroke-width="0.9"/>
</g>
<g transform="translate(51.8,-14.2)">
<path d="M97.2,337.5 Q97.3,335.3 101.5,335.3 Q105.7,335.3 105.8,337.5 L105.8,361.5 Q105.5,363.5 101.5,363.5 Q97.5,363.5 97.2,361.5 Z" fill="#fff" stroke-width="1.2"/>
<path d="M98.8,337.8 Q101.5,339.3 104.2,337.8" stroke-width="0.9"/>
</g>
<path d="M105.9,349 L125.5,341.5 M134,337.5 L148.8,333.2" stroke-width="1.1"/>
<path d="M31.2,376.5 V383.5 Q31.2,385 33,385.2" stroke-width="1"/>
<path d="M33.5,382.5 Q32.5,388.5 35,390 L40,391.6 Q45.5,392.5 45.8,386.5 Q45.5,381 40.5,380.2 L35.5,380 Q33.5,380 33.5,382.5 Z" fill="#fff" stroke-width="1.2"/>
<ellipse cx="41.8" cy="386.0" rx="3.6" ry="5.2" stroke-width="1.2" fill="#fff" transform="rotate(-12 41.8 386.0)"/>
<path d="M37,380.5 Q35.5,385.5 37.5,390.8 M38.8,381.5 Q37.8,385.8 39.3,390.5" stroke-width="0.9"/>
<path d="M41.5,384.5 Q40.5,386.5 42,388.5" stroke-width="0.8"/>
<ellipse cx="57.6" cy="375.2" rx="7.3" ry="3.4" stroke-width="1.2" fill="#fff"/>
<path d="M50.3,375.2 L50.4,379.5 Q52.5,383.2 57.6,383.2 Q62.7,383.2 64.8,379.5 L64.9,375.2" fill="#fff" stroke-width="1.2"/>
<path d="M51.5,378.8 Q54,380 58.5,379 Q62,378.2 64.2,378.5" stroke-width="0.9"/>
<path d="M57,383.7 V402.2" stroke-width="0.9"/>
<path d="M64.9,373.8 L72.2,367.2" stroke-width="1"/>
</g>
<g stroke="#000" fill="none" stroke-width="1.1" stroke-linejoin="round" stroke-linecap="round">
<path d="M331.4,360.9 L343.5,369.5 Q346.7,372 346.7,376 L346.7,391.8 Q346.5,397 338.5,399.2 L92,467.5 L88,467 Q84,463 80,466 L62,463.5 Q58,466 53.6,464.8 L19.3,439.7 L19.3,422.5 L15.5,419.8 L15.5,405 Q15.5,401.5 19,400.5" stroke-width="1.3"/>
<path d="M331.4,360.9 L343.5,369.5 Q346.7,372 346.7,378" stroke-width="2"/>
<path d="M17,403 L289.3,325.5" stroke-width="1.7"/>
<ellipse cx="293.0" cy="326.8" rx="4.5" ry="3.0" stroke-width="1.3" fill="#fff"/>
<ellipse cx="292.6" cy="326.6" rx="2.0" ry="1.3" stroke-width="1.2" fill="#000"/>
<path d="M296.5,329 L313.5,338.5" stroke-width="2.3"/>
<path d="M296,332.5 L311,340.5" stroke-width="0.9"/>
<path d="M20,409 L150,373 M206.5,355.4 L230,349 M248,344 L286.5,333.6 L313.2,340.8" stroke-width="0.8"/>
<path d="M47.3,395.7 L49.0,392.7 L53.0,391.9 L54.0,394.7 Z" fill="#fff" stroke-width="1.1"/>
<path d="M49.0,395.5 L47.5,400.5 M52.5,394.7 L56.0,399.0" stroke-width="0.7"/>
<path d="M88.0,384.2 L89.7,381.2 L93.7,380.4 L94.7,383.2 Z" fill="#fff" stroke-width="1.1"/>
<path d="M89.7,384.0 L88.2,389.0 M93.2,383.2 L96.7,387.5" stroke-width="0.7"/>
<path d="M128.7,372.7 L130.4,369.7 L134.4,368.9 L135.4,371.7 Z" fill="#fff" stroke-width="1.1"/>
<path d="M130.4,372.5 L128.9,377.5 M133.9,371.7 L137.4,376.0" stroke-width="0.7"/>
<path d="M169.4,361.2 L171.1,358.2 L175.1,357.4 L176.1,360.2 Z" fill="#fff" stroke-width="1.1"/>
<path d="M171.1,361.0 L169.6,366.0 M174.6,360.2 L178.1,364.5" stroke-width="0.7"/>
<path d="M210.1,349.7 L211.8,346.7 L215.8,345.9 L216.8,348.7 Z" fill="#fff" stroke-width="1.1"/>
<path d="M211.8,349.5 L210.3,354.5 M215.3,348.7 L218.8,353.0" stroke-width="0.7"/>
<path d="M250.8,338.2 L252.5,335.2 L256.5,334.4 L257.5,337.2 Z" fill="#fff" stroke-width="1.1"/>
<path d="M252.5,338.0 L251.0,343.0 M256.0,337.2 L259.5,341.5" stroke-width="0.7"/>
<path d="M89.4,439.6 L345.5,366.4" stroke-width="1"/>
<path d="M89.4,436 V467" stroke-width="0.8"/>
<path d="M92.9,443.5 Q92.9,441.5 94.9,441.0 L107.4,437.5 Q108.9,437.0 108.9,439.0 L109.2,454.5 Q109.2,456.0 107.4,456.5 L94.9,460.0 Q93.2,460.5 93.2,458.5 Z" fill="#fff" stroke-width="1.5"/>
<path d="M94.1,443.5 L94.3,458.5" stroke-width="1.6"/>
<path d="M100.9,449.5 L105.4,453.5" stroke-width="0.9"/>
<circle cx="101.7" cy="463.3" r="1.2" fill="#000" stroke="none"/>
<path d="M133.8,431.5 Q133.8,429.5 135.8,429.0 L148.3,425.5 Q149.8,425.0 149.8,427.0 L150.1,442.5 Q150.1,444.0 148.3,444.5 L135.8,448.0 Q134.1,448.5 134.1,446.5 Z" fill="#fff" stroke-width="1.5"/>
<path d="M135.0,431.5 L135.2,446.5" stroke-width="1.6"/>
<path d="M141.8,437.5 L146.3,441.5" stroke-width="0.9"/>
<circle cx="142.6" cy="451.3" r="1.2" fill="#000" stroke="none"/>
<path d="M174.7,419.5 Q174.7,417.5 176.7,417.0 L189.2,413.5 Q190.7,413.0 190.7,415.0 L191.0,430.5 Q191.0,432.0 189.2,432.5 L176.7,436.0 Q175.0,436.5 175.0,434.5 Z" fill="#fff" stroke-width="1.5"/>
<path d="M175.9,419.5 L176.1,434.5" stroke-width="1.6"/>
<path d="M182.7,425.5 L187.2,429.5" stroke-width="0.9"/>
<circle cx="183.5" cy="439.3" r="1.2" fill="#000" stroke="none"/>
<path d="M215.6,407.5 Q215.6,405.5 217.6,405.0 L230.1,401.5 Q231.6,401.0 231.6,403.0 L231.9,418.5 Q231.9,420.0 230.1,420.5 L217.6,424.0 Q215.9,424.5 215.9,422.5 Z" fill="#fff" stroke-width="1.5"/>
<path d="M216.8,407.5 L217.0,422.5" stroke-width="1.6"/>
<path d="M223.6,413.5 L228.1,417.5" stroke-width="0.9"/>
<circle cx="224.4" cy="427.3" r="1.2" fill="#000" stroke="none"/>
<path d="M256.5,395.5 Q256.5,393.5 258.5,393.0 L271.0,389.5 Q272.5,389.0 272.5,391.0 L272.8,406.5 Q272.8,408.0 271.0,408.5 L258.5,412.0 Q256.8,412.5 256.8,410.5 Z" fill="#fff" stroke-width="1.5"/>
<path d="M257.7,395.5 L257.9,410.5" stroke-width="1.6"/>
<path d="M264.5,401.5 L269.0,405.5" stroke-width="0.9"/>
<circle cx="265.3" cy="415.3" r="1.2" fill="#000" stroke="none"/>
<path d="M297.4,383.5 Q297.4,381.5 299.4,381.0 L311.9,377.5 Q313.4,377.0 313.4,379.0 L313.7,394.5 Q313.7,396.0 311.9,396.5 L299.4,400.0 Q297.7,400.5 297.7,398.5 Z" fill="#fff" stroke-width="1.5"/>
<path d="M298.6,383.5 L298.8,398.5" stroke-width="1.6"/>
<path d="M305.4,389.5 L309.9,393.5" stroke-width="0.9"/>
<circle cx="306.2" cy="403.3" r="1.2" fill="#000" stroke="none"/>
<g transform="translate(97.3,416.9)">
<ellipse cx="-1.0" cy="-24.7" rx="2.6" ry="1.4" stroke-width="1.1" fill="none"/>
<ellipse cx="10.6" cy="-28.8" rx="2.7" ry="1.6" stroke-width="1.2" fill="none"/>
<path d="M4,-29 L4,-23.5 M18.5,-26.5 L18.5,-21 M8.7,-18.5 Q11.7,-17.8 14.2,-19" stroke-width="0.9"/>
<ellipse cx="20.9" cy="-31.2" rx="2.6" ry="1.3" stroke-width="1.1" fill="none"/>
<path d="M-4.7,-16.2 Q-4.5,-20.7 0.3,-20.7 Q5.3,-20.7 5.3,-16.2" stroke-width="2.2"/>
<ellipse cx="0.3" cy="-16.5" rx="3.0" ry="1.5" stroke-width="1" fill="none"/>
<ellipse cx="-1.8" cy="-8.4" rx="6.2" ry="3.6" stroke-width="1.8" fill="none"/>
<ellipse cx="-1.5" cy="-8.6" rx="3.3" ry="1.6" stroke-width="1.1" fill="none"/>
<path d="M14.6,-13 Q15,-18.2 21.6,-18.2 Q28.6,-18.2 28.8,-13" stroke-width="2.2"/>
<ellipse cx="21.6" cy="-14.0" rx="3.6" ry="1.6" stroke-width="1" fill="none"/>
<path d="M12,-4.5 Q12,-8.3 16.8,-8.3 Q21.6,-8.3 21.6,-4.5 L21.6,-1 M12,-4.5 L12,-1" stroke-width="1.5"/>
<ellipse cx="16.8" cy="-4.9" rx="2.8" ry="1.3" stroke-width="1" fill="none"/>
<path d="M-19,3 Q-14,1 -12,-1 L-7,-4.5 Q-2,-6 4,-7.5 L10,-10 Q13,-10.5 14.6,-13" stroke-width="2.2"/>
<path d="M-7,0 Q-8,-5 -1,-5.5 Q5,-5.5 8,-2 Q11,-0.5 13.5,0.5 Q16,2.5 14.5,5 Q12.5,7.5 8,6 Q5,7 1,6.5 Q-6,5.5 -7,0 Z" fill="#fff" stroke-width="1.2"/>
<ellipse cx="0.0" cy="0.0" rx="4.6" ry="2.9" stroke-width="1.3" fill="none"/>
<ellipse cx="0.0" cy="0.0" rx="3.2" ry="1.9" stroke-width="0.9" fill="none"/>
<ellipse cx="11.4" cy="3.0" rx="2.2" ry="1.6" stroke-width="1" fill="none"/>
<path d="M-12,4 L-8,3.2 M17.5,2.5 Q20,3.5 19,6.5 L17.5,7.5" stroke-width="0.9"/>
<path d="M0,10.5 Q0,6.8 4.4,6.8 Q8.8,6.8 8.8,10.5" stroke-width="2"/>
<ellipse cx="4.4" cy="10.2" rx="3.0" ry="1.4" stroke-width="1" fill="none"/>
<path d="M2,12 L0,17 L2.5,16.5 Z" fill="#000" stroke-width="1"/>
<path d="M1,13.5 L-2.5,19" stroke-width="0.8"/>
</g>
<g transform="translate(138.5,405.5)">
<ellipse cx="-1.0" cy="-24.7" rx="2.6" ry="1.4" stroke-width="1.1" fill="none"/>
<ellipse cx="10.6" cy="-28.8" rx="2.7" ry="1.6" stroke-width="1.2" fill="none"/>
<path d="M4,-29 L4,-23.5 M18.5,-26.5 L18.5,-21 M8.7,-18.5 Q11.7,-17.8 14.2,-19" stroke-width="0.9"/>
<ellipse cx="20.9" cy="-31.2" rx="2.6" ry="1.3" stroke-width="1.1" fill="none"/>
<path d="M-4.7,-16.2 Q-4.5,-20.7 0.3,-20.7 Q5.3,-20.7 5.3,-16.2" stroke-width="2.2"/>
<ellipse cx="0.3" cy="-16.5" rx="3.0" ry="1.5" stroke-width="1" fill="none"/>
<ellipse cx="-1.8" cy="-8.4" rx="6.2" ry="3.6" stroke-width="1.8" fill="none"/>
<ellipse cx="-1.5" cy="-8.6" rx="3.3" ry="1.6" stroke-width="1.1" fill="none"/>
<path d="M14.6,-13 Q15,-18.2 21.6,-18.2 Q28.6,-18.2 28.8,-13" stroke-width="2.2"/>
<ellipse cx="21.6" cy="-14.0" rx="3.6" ry="1.6" stroke-width="1" fill="none"/>
<path d="M12,-4.5 Q12,-8.3 16.8,-8.3 Q21.6,-8.3 21.6,-4.5 L21.6,-1 M12,-4.5 L12,-1" stroke-width="1.5"/>
<ellipse cx="16.8" cy="-4.9" rx="2.8" ry="1.3" stroke-width="1" fill="none"/>
<path d="M-19,3 Q-14,1 -12,-1 L-7,-4.5 Q-2,-6 4,-7.5 L10,-10 Q13,-10.5 14.6,-13" stroke-width="2.2"/>
<path d="M-7,0 Q-8,-5 -1,-5.5 Q5,-5.5 8,-2 Q11,-0.5 13.5,0.5 Q16,2.5 14.5,5 Q12.5,7.5 8,6 Q5,7 1,6.5 Q-6,5.5 -7,0 Z" fill="#fff" stroke-width="1.2"/>
<ellipse cx="0.0" cy="0.0" rx="4.6" ry="2.9" stroke-width="1.3" fill="none"/>
<ellipse cx="0.0" cy="0.0" rx="3.2" ry="1.9" stroke-width="0.9" fill="none"/>
<ellipse cx="11.4" cy="3.0" rx="2.2" ry="1.6" stroke-width="1" fill="none"/>
<path d="M-12,4 L-8,3.2 M17.5,2.5 Q20,3.5 19,6.5 L17.5,7.5" stroke-width="0.9"/>
<path d="M0,10.5 Q0,6.8 4.4,6.8 Q8.8,6.8 8.8,10.5" stroke-width="2"/>
<ellipse cx="4.4" cy="10.2" rx="3.0" ry="1.4" stroke-width="1" fill="none"/>
<path d="M2,12 L0,17 L2.5,16.5 Z" fill="#000" stroke-width="1"/>
<path d="M1,13.5 L-2.5,19" stroke-width="0.8"/>
</g>
<g transform="translate(179.7,394.1)">
<ellipse cx="-1.0" cy="-24.7" rx="2.6" ry="1.4" stroke-width="1.1" fill="none"/>
<ellipse cx="10.6" cy="-28.8" rx="2.7" ry="1.6" stroke-width="1.2" fill="none"/>
<path d="M4,-29 L4,-23.5 M18.5,-26.5 L18.5,-21 M8.7,-18.5 Q11.7,-17.8 14.2,-19" stroke-width="0.9"/>
<ellipse cx="20.9" cy="-31.2" rx="2.6" ry="1.3" stroke-width="1.1" fill="none"/>
<path d="M-4.7,-16.2 Q-4.5,-20.7 0.3,-20.7 Q5.3,-20.7 5.3,-16.2" stroke-width="2.2"/>
<ellipse cx="0.3" cy="-16.5" rx="3.0" ry="1.5" stroke-width="1" fill="none"/>
<ellipse cx="-1.8" cy="-8.4" rx="6.2" ry="3.6" stroke-width="1.8" fill="none"/>
<ellipse cx="-1.5" cy="-8.6" rx="3.3" ry="1.6" stroke-width="1.1" fill="none"/>
<path d="M14.6,-13 Q15,-18.2 21.6,-18.2 Q28.6,-18.2 28.8,-13" stroke-width="2.2"/>
<ellipse cx="21.6" cy="-14.0" rx="3.6" ry="1.6" stroke-width="1" fill="none"/>
<path d="M12,-4.5 Q12,-8.3 16.8,-8.3 Q21.6,-8.3 21.6,-4.5 L21.6,-1 M12,-4.5 L12,-1" stroke-width="1.5"/>
<ellipse cx="16.8" cy="-4.9" rx="2.8" ry="1.3" stroke-width="1" fill="none"/>
<path d="M-19,3 Q-14,1 -12,-1 L-7,-4.5 Q-2,-6 4,-7.5 L10,-10 Q13,-10.5 14.6,-13" stroke-width="2.2"/>
<path d="M-7,0 Q-8,-5 -1,-5.5 Q5,-5.5 8,-2 Q11,-0.5 13.5,0.5 Q16,2.5 14.5,5 Q12.5,7.5 8,6 Q5,7 1,6.5 Q-6,5.5 -7,0 Z" fill="#fff" stroke-width="1.2"/>
<ellipse cx="0.0" cy="0.0" rx="4.6" ry="2.9" stroke-width="1.3" fill="none"/>
<ellipse cx="0.0" cy="0.0" rx="3.2" ry="1.9" stroke-width="0.9" fill="none"/>
<ellipse cx="11.4" cy="3.0" rx="2.2" ry="1.6" stroke-width="1" fill="none"/>
<path d="M-12,4 L-8,3.2 M17.5,2.5 Q20,3.5 19,6.5 L17.5,7.5" stroke-width="0.9"/>
<path d="M0,10.5 Q0,6.8 4.4,6.8 Q8.8,6.8 8.8,10.5" stroke-width="2"/>
<ellipse cx="4.4" cy="10.2" rx="3.0" ry="1.4" stroke-width="1" fill="none"/>
<path d="M2,12 L0,17 L2.5,16.5 Z" fill="#000" stroke-width="1"/>
<path d="M1,13.5 L-2.5,19" stroke-width="0.8"/>
</g>
<g transform="translate(220.9,382.7)">
<ellipse cx="-1.0" cy="-24.7" rx="2.6" ry="1.4" stroke-width="1.1" fill="none"/>
<ellipse cx="10.6" cy="-28.8" rx="2.7" ry="1.6" stroke-width="1.2" fill="none"/>
<path d="M4,-29 L4,-23.5 M18.5,-26.5 L18.5,-21 M8.7,-18.5 Q11.7,-17.8 14.2,-19" stroke-width="0.9"/>
<ellipse cx="20.9" cy="-31.2" rx="2.6" ry="1.3" stroke-width="1.1" fill="none"/>
<path d="M-4.7,-16.2 Q-4.5,-20.7 0.3,-20.7 Q5.3,-20.7 5.3,-16.2" stroke-width="2.2"/>
<ellipse cx="0.3" cy="-16.5" rx="3.0" ry="1.5" stroke-width="1" fill="none"/>
<ellipse cx="-1.8" cy="-8.4" rx="6.2" ry="3.6" stroke-width="1.8" fill="none"/>
<ellipse cx="-1.5" cy="-8.6" rx="3.3" ry="1.6" stroke-width="1.1" fill="none"/>
<path d="M14.6,-13 Q15,-18.2 21.6,-18.2 Q28.6,-18.2 28.8,-13" stroke-width="2.2"/>
<ellipse cx="21.6" cy="-14.0" rx="3.6" ry="1.6" stroke-width="1" fill="none"/>
<path d="M12,-4.5 Q12,-8.3 16.8,-8.3 Q21.6,-8.3 21.6,-4.5 L21.6,-1 M12,-4.5 L12,-1" stroke-width="1.5"/>
<ellipse cx="16.8" cy="-4.9" rx="2.8" ry="1.3" stroke-width="1" fill="none"/>
<path d="M-19,3 Q-14,1 -12,-1 L-7,-4.5 Q-2,-6 4,-7.5 L10,-10 Q13,-10.5 14.6,-13" stroke-width="2.2"/>
<path d="M-7,0 Q-8,-5 -1,-5.5 Q5,-5.5 8,-2 Q11,-0.5 13.5,0.5 Q16,2.5 14.5,5 Q12.5,7.5 8,6 Q5,7 1,6.5 Q-6,5.5 -7,0 Z" fill="#fff" stroke-width="1.2"/>
<ellipse cx="0.0" cy="0.0" rx="4.6" ry="2.9" stroke-width="1.3" fill="none"/>
<ellipse cx="0.0" cy="0.0" rx="3.2" ry="1.9" stroke-width="0.9" fill="none"/>
<ellipse cx="11.4" cy="3.0" rx="2.2" ry="1.6" stroke-width="1" fill="none"/>
<path d="M-12,4 L-8,3.2 M17.5,2.5 Q20,3.5 19,6.5 L17.5,7.5" stroke-width="0.9"/>
<path d="M0,10.5 Q0,6.8 4.4,6.8 Q8.8,6.8 8.8,10.5" stroke-width="2"/>
<ellipse cx="4.4" cy="10.2" rx="3.0" ry="1.4" stroke-width="1" fill="none"/>
<path d="M2,12 L0,17 L2.5,16.5 Z" fill="#000" stroke-width="1"/>
<path d="M1,13.5 L-2.5,19" stroke-width="0.8"/>
</g>
<g transform="translate(262.1,371.3)">
<ellipse cx="-1.0" cy="-24.7" rx="2.6" ry="1.4" stroke-width="1.1" fill="none"/>
<ellipse cx="10.6" cy="-28.8" rx="2.7" ry="1.6" stroke-width="1.2" fill="none"/>
<path d="M4,-29 L4,-23.5 M18.5,-26.5 L18.5,-21 M8.7,-18.5 Q11.7,-17.8 14.2,-19" stroke-width="0.9"/>
<ellipse cx="20.9" cy="-31.2" rx="2.6" ry="1.3" stroke-width="1.1" fill="none"/>
<path d="M-4.7,-16.2 Q-4.5,-20.7 0.3,-20.7 Q5.3,-20.7 5.3,-16.2" stroke-width="2.2"/>
<ellipse cx="0.3" cy="-16.5" rx="3.0" ry="1.5" stroke-width="1" fill="none"/>
<ellipse cx="-1.8" cy="-8.4" rx="6.2" ry="3.6" stroke-width="1.8" fill="none"/>
<ellipse cx="-1.5" cy="-8.6" rx="3.3" ry="1.6" stroke-width="1.1" fill="none"/>
<path d="M14.6,-13 Q15,-18.2 21.6,-18.2 Q28.6,-18.2 28.8,-13" stroke-width="2.2"/>
<ellipse cx="21.6" cy="-14.0" rx="3.6" ry="1.6" stroke-width="1" fill="none"/>
<path d="M12,-4.5 Q12,-8.3 16.8,-8.3 Q21.6,-8.3 21.6,-4.5 L21.6,-1 M12,-4.5 L12,-1" stroke-width="1.5"/>
<ellipse cx="16.8" cy="-4.9" rx="2.8" ry="1.3" stroke-width="1" fill="none"/>
<path d="M-19,3 Q-14,1 -12,-1 L-7,-4.5 Q-2,-6 4,-7.5 L10,-10 Q13,-10.5 14.6,-13" stroke-width="2.2"/>
<path d="M-7,0 Q-8,-5 -1,-5.5 Q5,-5.5 8,-2 Q11,-0.5 13.5,0.5 Q16,2.5 14.5,5 Q12.5,7.5 8,6 Q5,7 1,6.5 Q-6,5.5 -7,0 Z" fill="#fff" stroke-width="1.2"/>
<ellipse cx="0.0" cy="0.0" rx="4.6" ry="2.9" stroke-width="1.3" fill="none"/>
<ellipse cx="0.0" cy="0.0" rx="3.2" ry="1.9" stroke-width="0.9" fill="none"/>
<ellipse cx="11.4" cy="3.0" rx="2.2" ry="1.6" stroke-width="1" fill="none"/>
<path d="M-12,4 L-8,3.2 M17.5,2.5 Q20,3.5 19,6.5 L17.5,7.5" stroke-width="0.9"/>
<path d="M0,10.5 Q0,6.8 4.4,6.8 Q8.8,6.8 8.8,10.5" stroke-width="2"/>
<ellipse cx="4.4" cy="10.2" rx="3.0" ry="1.4" stroke-width="1" fill="none"/>
<path d="M2,12 L0,17 L2.5,16.5 Z" fill="#000" stroke-width="1"/>
<path d="M1,13.5 L-2.5,19" stroke-width="0.8"/>
</g>
<path d="M27.7,402.7 L33,411.5 L40,418.5 L47,423 L63,423 L75,421 L89.4,415.4 Q92,414 94,413" stroke-width="2.2"/>
<path d="M14.4,402.7 L14.4,418.5 L21.5,423.8 L31.2,426.5 L43.5,438 L56.8,434.4 L78.8,437 L85.9,430.9 L100,430" stroke-width="1.1"/>
<path d="M21.5,408 V423 M19.7,430 V445 M49.7,435 V450 M61.2,437 V463 M77,440 V466" stroke-width="0.9"/>
<path d="M27.7,404.4 L52.4,396.5" stroke-width="0.8"/>
<ellipse cx="25.9" cy="408.8" rx="2.6" ry="1.6" stroke-width="1.6" fill="none"/>
<ellipse cx="50.6" cy="405.3" rx="2.6" ry="1.3" stroke-width="1.1" fill="none"/>
<ellipse cx="57.7" cy="410.6" rx="5.0" ry="3.0" stroke-width="2" fill="none"/>
<ellipse cx="57.7" cy="410.6" rx="2.4" ry="1.2" stroke-width="1" fill="none"/>
<ellipse cx="66.5" cy="400.4" rx="2.7" ry="1.6" stroke-width="1.2" fill="none"/>
<path d="M60,400 V405 M74,402 V407 M63,409.5 Q67,410.5 70,409" stroke-width="0.9"/>
<ellipse cx="78.0" cy="397.8" rx="2.6" ry="1.3" stroke-width="1.1" fill="none"/>
<path d="M42.5,417.5 Q42.5,413 47,413 Q51.5,413 51.5,417.5 L51.5,420" stroke-width="2"/>
<ellipse cx="47.0" cy="416.8" rx="2.5" ry="1.2" stroke-width="1" fill="none"/>
<ellipse cx="70.9" cy="417.7" rx="7.0" ry="4.0" stroke-width="2" fill="none"/>
<ellipse cx="71.5" cy="418.5" rx="3.5" ry="1.7" stroke-width="1.1" fill="none"/>
<path d="M52.3,427 Q52.3,423 56.8,423 Q61.3,423 61.3,427 L61.3,431 M52.3,427 L52.3,431" stroke-width="2"/>
<ellipse cx="56.8" cy="426.8" rx="2.5" ry="1.2" stroke-width="1" fill="none"/>
<ellipse cx="84.1" cy="430.9" rx="2.8" ry="2.0" stroke-width="1.5" fill="#000"/>
<ellipse cx="310.0" cy="357.5" rx="6.0" ry="3.8" stroke-width="1.1" fill="none"/>
<path d="M304.5,356.5 Q310,352.8 315.5,356.5" stroke-width="1.6"/>
<path d="M290.4,353.5 Q292,349.5 296,348.3 Q302,347 306,350.5" stroke-width="2.1"/>
<ellipse cx="300.5" cy="351.0" rx="3.0" ry="1.5" stroke-width="1" fill="none"/>
<path d="M303.5,345 Q303.5,340 308.5,340 Q313.5,340 313.5,345 L313.5,348 M303.5,345 V348" stroke-width="1.6"/>
<ellipse cx="308.5" cy="343.5" rx="2.8" ry="1.3" stroke-width="1" fill="none"/>
<path d="M317,353 Q317,348.5 321.8,348.5 Q326.6,348.5 326.6,353 L326.6,358" stroke-width="1.5"/>
<path d="M304,372 Q304,366.5 308.5,366.5 Q313,366.5 313,372 L313,375" stroke-width="1.6"/>
<path d="M304,372 L302,377" stroke-width="1.2"/>
<path d="M318,368 L341.9,362" stroke-width="0.8"/>
<path d="M344.7,371 V392" stroke-width="0.9"/>
<path d="M317,389 L334,384.5 M334,384.5 L334,399" stroke-width="0.9"/>
<ellipse cx="326.5" cy="392.0" rx="2.8" ry="3.3" stroke-width="1.8" fill="none"/>
<ellipse cx="326.5" cy="392.0" rx="1.3" ry="1.6" stroke-width="1" fill="none"/>
<path d="M329,394 L340,401" stroke-width="0.9"/>
<path d="M43.5,438 Q42.5,441 43,444 L43,453 Q43.5,457 47.7,457 Q52,457 52.3,453 L52.3,440" stroke-width="1.1"/>
<ellipse cx="47.7" cy="450.9" rx="3.2" ry="3.8" stroke-width="1.8" fill="none"/>
<ellipse cx="47.7" cy="450.9" rx="1.4" ry="1.8" stroke-width="1" fill="none"/>
</g>
<g stroke="#000" fill="none" stroke-width="1.2">
<ellipse cx="245.7" cy="414.0" rx="6.0" ry="6.2" stroke-width="1.1" fill="none"/>
<ellipse cx="285.2" cy="403.7" rx="6.0" ry="6.2" stroke-width="1.1" fill="none"/>
<path d="M249.5,418.5 L259.8,422.5 V447 M288.5,408 L298,413.5 V440" stroke-width="0.8"/>
<ellipse cx="266.9" cy="451.9" rx="6.8" ry="6.8" stroke-width="1.3" fill="#fff"/>
<ellipse cx="269.2" cy="453.8" rx="6.6" ry="6.8" stroke-width="1.4" fill="#fff"/>
<path d="M261.2,451.5 Q261.7,446.5 267.2,445.7" stroke-width="0.9"/>
<ellipse cx="305.1" cy="442.9" rx="6.8" ry="6.8" stroke-width="1.3" fill="#fff"/>
<ellipse cx="307.4" cy="444.8" rx="6.6" ry="6.8" stroke-width="1.4" fill="#fff"/>
<path d="M299.4,442.5 Q299.9,437.5 305.4,436.7" stroke-width="0.9"/>
<path d="M248.3,456.8 H261 M293,448.5 H299" stroke-width="1.2"/>
<g transform="translate(0,2)">
<path d="M322,414 Q320,418 322.5,422.5 L326,426 Q330,428 333,425.5 L336,419 Q337,414 333,412 L328,411.5 Q323.5,411.5 322,414 Z" fill="#fff" stroke-width="1.2"/>
<ellipse cx="331.5" cy="419.5" rx="4.8" ry="5.5" stroke-width="1.3" fill="#fff" transform="rotate(-30 331.5 419.5)"/>
<path d="M324.5,412.5 Q321.5,419 326.5,425 M326.8,411.8 Q324,418.5 328.8,425.8" stroke-width="0.9"/>
<path d="M331,417 Q329,420 330.8,422.5" stroke-width="1"/>
</g>
<path d="M337,421.6 H340.5" stroke-width="1.1"/>
<path d="M320,413.5 V411 L342,405" stroke-width="0.9"/>
<path d="M320,413 L323,415" stroke-width="0.8"/>
</g>
<g stroke="#000" fill="none" stroke-width="1.2" stroke-linejoin="round" stroke-linecap="round">
<ellipse cx="104.1" cy="498.3" rx="12.6" ry="8.5" stroke-width="1.4" fill="#fff"/>
<ellipse cx="103.8" cy="496.2" rx="6.9" ry="3.9" stroke-width="1.2" fill="none"/>
<path d="M98.6,497.7 Q103.8,494.5 109.1,497.7" stroke-width="1.5"/>
<path d="M93.6,498.8 Q95.1,500.8 97.1,501.8 M111.6,500.8 Q113.6,499.8 114.6,497.8" stroke-width="0.8"/>
<ellipse cx="155.5" cy="485.3" rx="12.6" ry="8.5" stroke-width="1.4" fill="#fff"/>
<ellipse cx="155.2" cy="483.2" rx="6.9" ry="3.9" stroke-width="1.2" fill="none"/>
<path d="M150.0,484.7 Q155.2,481.5 160.5,484.7" stroke-width="1.5"/>
<path d="M145.0,485.8 Q146.5,487.8 148.5,488.8 M163.0,487.8 Q165.0,486.8 166.0,484.8" stroke-width="0.8"/>
<path d="M116.7,498.6 H124 M168,486 H178" stroke-width="1.1"/>
<path d="M101.3,512.5 L101.3,558.8 Q101.1,563.3 97.6,566.3 Q89.1,569.8 89.1,574.3 Q89.6,580.5 104.1,580.5 Q118.6,580.5 119.1,574.3 Q119.1,569.8 110.6,566.3 Q107.1,563.3 106.9,558.8 L106.9,512.5 Q104.1,510.7 101.3,512.5 Z" fill="#fff" stroke-width="1.2"/>
<path d="M101.5,514.5 H106.7 M101.5,516.5 H106.7 M101.4,550.8 H106.8 M101.4,558.8 H106.8" stroke-width="0.9"/>
<path d="M102.3,551.8 V557.8" stroke="#aaa" stroke-width="1"/>
<path d="M95.1,574.8 Q104.1,577.3 113.1,573.8" stroke-width="0.8"/>
<path d="M151.4,499.2 L151.4,550.3 Q151.2,554.8 147.7,557.8 Q143.0,561.3 143.0,561.7 Q143.5,566.1 154.2,566.1 Q164.9,566.1 165.4,561.7 Q165.4,561.3 160.7,557.8 Q157.2,554.8 157.0,550.3 L157.0,499.2 Q154.2,497.4 151.4,499.2 Z" fill="#fff" stroke-width="1.2"/>
<path d="M151.6,501.2 H156.8 M151.6,503.2 H156.8 M151.5,542.3 H156.9 M151.5,550.3 H156.9" stroke-width="0.9"/>
<path d="M152.4,543.3 V549.3" stroke="#aaa" stroke-width="1"/>
<path d="M149.0,562.2 Q154.2,564.7 159.4,561.2" stroke-width="0.8"/>
<path d="M106.8,541.4 H120 M156.9,521.5 H169" stroke-width="1.1"/>
<path d="M67,488.5 Q67,486.2 72.6,486.2 Q78.3,486.2 78.3,488.5 L78.3,495.8 Q78,498.2 72.6,498.2 Q67.2,498.2 67,495.8 Z" fill="#fff" stroke-width="1.2"/>
<path d="M67.3,490.5 Q72.6,493 78.1,490.5 M67.3,493 Q72.6,495.5 78.1,493 M67.3,495.5 Q72.6,498 78.1,495.5" stroke-width="1"/>
<path d="M73.5,467.5 V486" stroke-width="0.9"/>
<path d="M59,492 H67" stroke-width="1.1"/>
<path d="M286.8,492.5 Q286.8,490.6 289.5,490.6 Q292.2,490.6 292.2,492.5 L292.2,501 Q292,503 289.5,503 Q287,503 286.8,501 Z" fill="#fff" stroke-width="1.1"/>
<path d="M287,493 Q289.5,494.5 292,493" stroke-width="0.8"/>
<path d="M292.3,497 H308" stroke-width="1"/>
<path d="M258,515.5 L277,533" stroke-width="1"/>
<path d="M188.5,456.3 V467.5" stroke-width="1"/>
<path d="M33.5,461 L39.5,455" stroke-width="1"/>
</g>
<!-- Perkins logo -->
<g fill="none" stroke="#0d4f9e">
  <circle cx="1074.6" cy="640.2" r="6.6" stroke-width="3.1"/>
  <circle cx="1090.8" cy="640.2" r="6.6" stroke-width="3.1"/>
  <circle cx="1074.6" cy="656.6" r="6.6" stroke-width="3.1"/>
  <circle cx="1090.8" cy="656.6" r="6.6" stroke-width="3.1"/>
  <path d="M1070.5,644.5 L1078.8,636 M1086.6,636 L1095,644.5 M1070.5,652.3 L1078.8,660.8 M1086.6,660.8 L1095,652.3" stroke-width="2.6"/>
</g>
<path d="M1082.7,631.5 L1084.5,635.5 L1080.9,635.5 Z M1082.7,665.2 L1084.5,661.2 L1080.9,661.2 Z M1066.2,648.4 L1070,646.6 L1070,650.2 Z M1099.2,648.4 L1095.4,646.6 L1095.4,650.2 Z" fill="#0d4f9e"/>
<text x="1065.3" y="678" font-family="Liberation Sans" font-weight="bold" font-size="11.2" fill="#0d4f9e" textLength="35" lengthAdjust="spacingAndGlyphs">Perkins</text>
<circle cx="1102.5" cy="670.5" r="1" fill="#0d4f9e" opacity="0.6"/>

</svg>
</body></html>
